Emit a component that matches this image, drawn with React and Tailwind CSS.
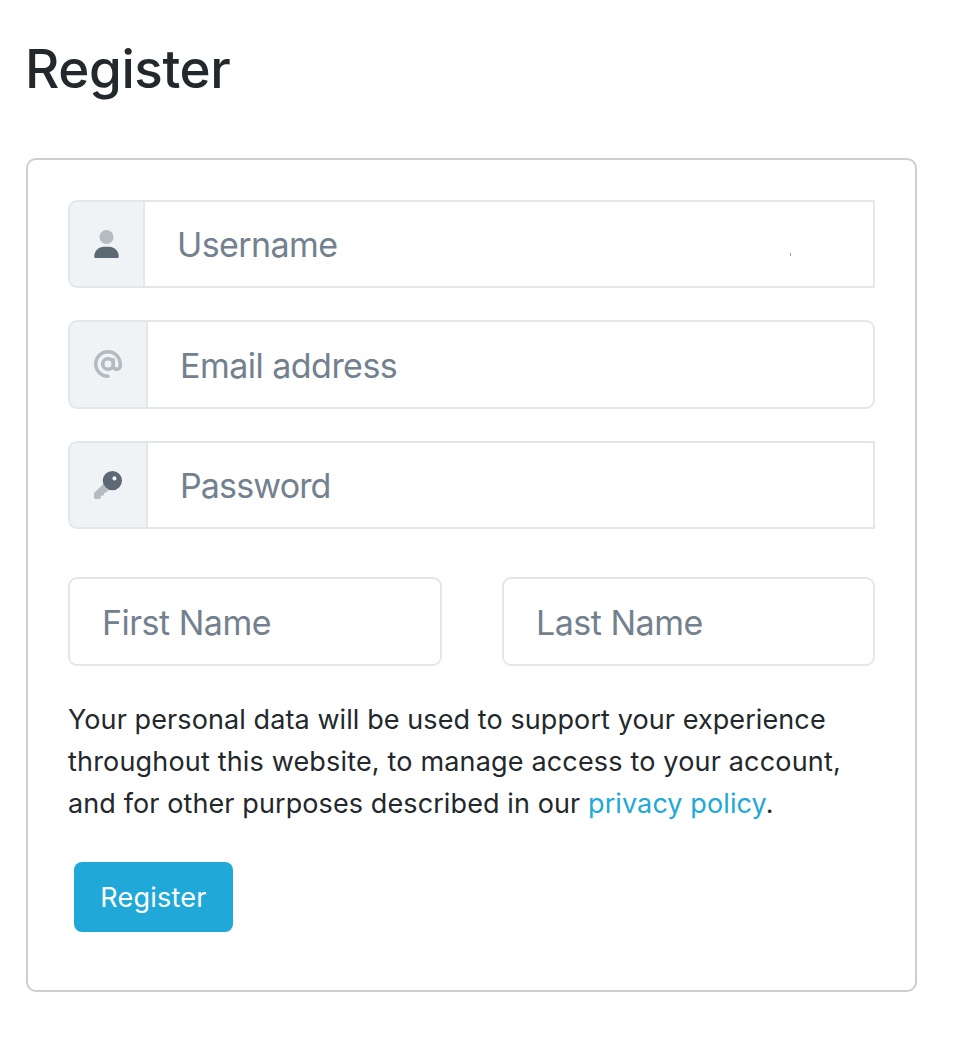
import React from "react";

function UserIcon() {
  return (
    <svg viewBox="0 0 448 512" className="h-7 w-[25px]" fill="#5c6873">
      <circle cx="224" cy="128" r="128" opacity="0.4" />
      <path d="M178.300 304C79.800 304 0 383.800 0 482.300C0 498.700 13.300 512 29.700 512h388.600c16.400 0 29.700-13.300 29.700-29.700C448 383.800 368.200 304 269.700 304z" />
    </svg>
  );
}

function AtIcon() {
  return (
    <svg viewBox="0 0 512 512" className="mb-px size-7" fill="#5c6873" opacity="0.4">
      <path d="M256 64C150 64 64 150 64 256s86 192 192 192c17.700 0 32 14.300 32 32s-14.300 32-32 32C114.600 512 0 397.400 0 256S114.600 0 256 0S512 114.600 512 256l0 32c0 53-43 96-96 96c-29.300 0-55.600-13.200-73.200-33.900C320 371.100 289.500 384 256 384c-70.700 0-128-57.300-128-128s57.300-128 128-128c27.900 0 53.700 8.900 74.700 24.100c5.700-5 13.100-8.100 21.300-8.100c17.700 0 32 14.300 32 32l0 80 0 32c0 17.700 14.300 32 32 32s32-14.300 32-32l0-32c0-106-86-192-192-192zm64 192a64 64 0 1 0 -128 0 64 64 0 1 0 128 0z" />
    </svg>
  );
}

function KeyIcon() {
  return (
    <svg viewBox="0 0 512 512" className="size-7" fill="#5c6873">
      <path
        opacity="0.4"
        d="M172 238L15 388Q0 402 0 424V482Q0 512 30 512H88Q112 512 122 490L132 452L166 446Q180 442 182 426L188 400L218 394Q230 390 238 380L274 341Q194 312 172 238z"
      />
      <path
        fillRule="evenodd"
        d="M336 0a176 176 0 1 0 0 352a176 176 0 1 0 0-352zM374 98a38 38 0 1 1 0 76a38 38 0 1 1 0-76z"
      />
    </svg>
  );
}

const inputText =
  "min-w-0 border-2 border-[#e4e7ea] bg-white text-[34px] text-[#73818f] placeholder:text-[#73818f] placeholder:opacity-100 outline-none";

function Addon({ width, children }) {
  return (
    <span
      className={`${width} flex shrink-0 items-center justify-center rounded-l-[9px] border-2 border-r-0 border-[#e4e7ea] bg-[#f0f3f5]`}
    >
      {children}
    </span>
  );
}

export default function App() {
  return (
    <main className="h-[1048px] w-[960px] bg-white pl-[26px] pt-[37px] font-['Inter',sans-serif] text-[#23282c]">
      <h1 className="-ml-px h-[121px] text-[53px] font-medium leading-[64px] tracking-[-0.4px]">Register</h1>
      <form className="h-[834px] w-[891px] rounded-[10px] border-2 border-[#cccecf] px-10 pt-10">
        <div className="relative flex h-[88px] w-[807px]">
          <Addon width="w-[75px]">
            <UserIcon />
          </Addon>
          <input
            aria-label="Username"
            placeholder="Username"
            className={`${inputText} flex-1 pl-8 pt-px tracking-[-0.6px]`}
          />
          <span className="absolute right-[84px] top-[53px] h-[3px] w-px bg-[#a3979c]" />
        </div>
        <div className="mt-8 flex h-[89px] w-[807px]">
          <Addon width="w-[78px]">
            <AtIcon />
          </Addon>
          <input
            aria-label="Email address"
            placeholder="Email address"
            className={`${inputText} flex-1 rounded-r-[9px] pl-8 pt-0.5 tracking-[-0.52px]`}
          />
        </div>
        <div className="mt-8 flex h-[88px] w-[807px]">
          <Addon width="w-[78px]">
            <KeyIcon />
          </Addon>
          <input
            type="password"
            aria-label="Password"
            placeholder="Password"
            className={`${inputText} flex-1 pl-8 pt-px tracking-[-0.85px]`}
          />
        </div>
        <div className="mt-12 flex h-[89px] w-[807px] justify-between">
          <input
            aria-label="First Name"
            placeholder="First Name"
            className={`${inputText} w-[374px] rounded-[9px] pl-8 pt-0.5 tracking-[-0.5px]`}
          />
          <input
            aria-label="Last Name"
            placeholder="Last Name"
            className={`${inputText} w-[373px] rounded-[9px] pl-8 pt-0.5 tracking-[-0.5px]`}
          />
        </div>
        <p className="mt-[33px] text-[27px] leading-[42px]">
          <span className="block whitespace-nowrap tracking-[0.09px]">Your personal data will be used to support your experience</span>
          <span className="block whitespace-nowrap tracking-[0.17px]">throughout this website, to manage access to your account,</span>
          <span className="block whitespace-nowrap tracking-[0.1px]">
            and for other purposes described in our{" "}
            <a href="#privacy" className="text-[#20a8d8]">privacy policy</a>.
          </span>
        </p>
        <button
          type="button"
          className="ml-1.5 mt-[37px] flex h-[70px] w-[159px] items-center justify-center rounded-lg bg-[#20a8d8] pt-0.5 text-[27px] tracking-[0.25px] text-white"
        >
          Register
        </button>
      </form>
    </main>
  );
}
